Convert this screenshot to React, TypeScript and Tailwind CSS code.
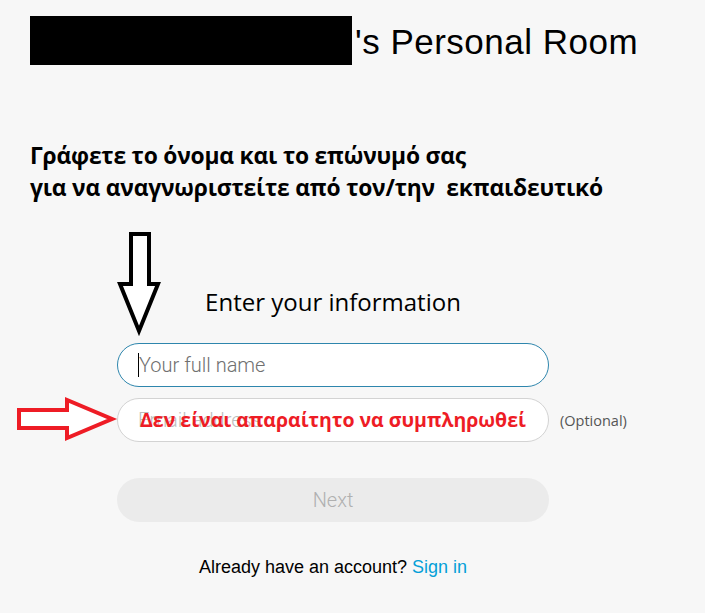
export default function App() {
  return (
    <div className="relative min-h-screen w-full bg-[#f7f7f7] font-['Liberation_Sans',sans-serif] text-black">
      {/* header */}
      <div className="flex items-start pl-[30px] pt-4">
        <div className="h-[49px] w-[322px] bg-black" />
        <div className="mt-[5px] pl-[3px] text-[35px] leading-[42px] tracking-[0.5px]">'s Personal Room</div>
      </div>

      {/* note */}
      <div className="mt-[75px] pl-[30px] font-['Open_Sans',sans-serif] text-[22.8px] font-bold leading-[32px] tracking-[-0.2px]">
        <div>Γράφετε το όνομα και το επώνυμό σας</div>
        <div className="whitespace-pre">για να αναγνωριστείτε από τον/την  εκπαιδευτικό</div>
      </div>

      {/* form */}
      <div className="ml-[117px] mt-[83px] flex w-[432px] flex-col">
        <div className="text-center font-['Open_Sans',sans-serif] text-[24px] leading-[30px]">Enter your information</div>

        <div className="mt-[26px] flex h-[44px] items-center rounded-full border border-[#2e86ad] bg-white pl-[20px]">
          <span className="h-[24px] w-px bg-black" />
          <span className="font-['Roboto',sans-serif] text-[20px] font-light text-[#707070]">Your full name</span>
        </div>

        <div className="relative mt-[11px] flex items-center">
          <div className="flex h-[44px] w-[432px] items-center rounded-full border border-[#d3d3d3] bg-white pl-[20px]">
            <span className="font-['Roboto',sans-serif] text-[20px] font-light text-[#bdbdbd]">Email address</span>
          </div>
          <span className="absolute left-[443px] top-[12px] whitespace-nowrap font-['Open_Sans',sans-serif] text-[14.5px] text-[#555]">(Optional)</span>
          <span className="absolute left-[23px] top-[7px] whitespace-nowrap font-['Open_Sans',sans-serif] text-[19.5px] font-bold text-[#ee1c25]">Δεν είναι απαραίτητο να συμπληρωθεί</span>
        </div>

        <div className="mt-[36px] flex h-[44px] items-center justify-center rounded-full bg-[#ebebeb]">
          <span className="font-['Roboto',sans-serif] text-[20px] font-light text-[#b0b0b0]">Next</span>
        </div>

        <div className="mt-[32px] text-center text-[18px]">
          Already have an account? <span className="text-[#04a0d8]">Sign in</span>
        </div>
      </div>

      {/* annotation arrows */}
      <svg className="absolute left-[110px] top-[225px]" width="60" height="115" viewBox="110 225 60 115">
        <polygon
          points="131,234 149,234 149,284 158,284 139,331 120,284 131,284"
          fill="white"
          stroke="black"
          strokeWidth="4"
          strokeLinejoin="miter"
        />
      </svg>
      <svg className="absolute left-[10px] top-[395px]" width="110" height="50" viewBox="10 395 110 50">
        <polygon
          points="19,410 67,410 67,400 112,419 67,438 67,428 19,428"
          fill="white"
          stroke="#ee1c25"
          strokeWidth="4"
          strokeLinejoin="miter"
        />
      </svg>
    </div>
  );
}
